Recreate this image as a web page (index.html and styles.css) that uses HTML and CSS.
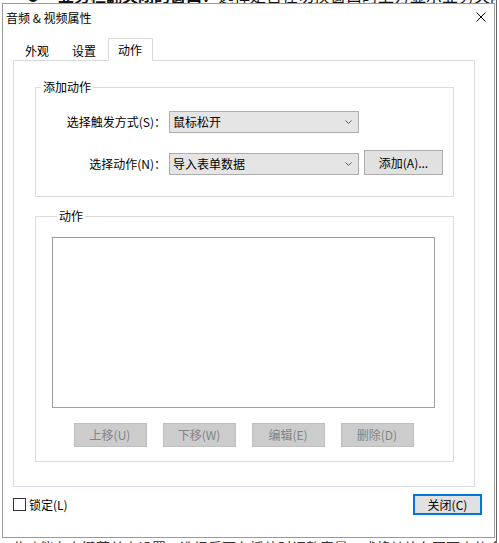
FILE: index.html
```html
<!DOCTYPE html>
<html lang="zh-CN">
<head>
  <meta charset="UTF-8">
  <title>音频 & 视频属性</title>
  <meta name="viewport" content="width=device-width, initial-scale=1.0">
  <link rel="stylesheet" href="styles.css">
</head>
<body>

  <!-- Document behind the dialog -->
  <div class="doc">
    <p class="doc-top"><span class="bullet">●</span><b>业务栏翻关闭的窗口：</b>选择是否在切换窗口时上方显示业务关闭按钮。</p>
    <p class="doc-bottom">此功能在右键菜单中设置，选择后可在播放时调整音量，或将其放在页面中的合适位置。</p>
  </div>

  <!-- Properties dialog -->
  <div class="dialog">
    <div class="titlebar">
      <span class="title">音频 &amp; 视频属性</span>
      <svg class="close-x" width="10" height="10" viewBox="0 0 10 10">
        <path d="M0.5 0.5 L9.5 9.5 M9.5 0.5 L0.5 9.5" stroke="#000" stroke-width="1" fill="none"/>
      </svg>
    </div>

    <div class="content">
      <div class="tabs">
        <div class="tab">外观</div>
        <div class="tab tab-second">设置</div>
        <div class="tab active">动作</div>
      </div>

      <div class="panel">
        <fieldset class="group group-add">
          <legend>添加动作</legend>
          <div class="row">
            <label class="row-label">选择触发方式(S)：</label>
            <div class="combo">
              <span>鼠标松开</span>
              <svg width="7" height="4" viewBox="0 0 7 4"><path d="M0.5 0.5 L3.5 3.5 L6.5 0.5" stroke="#555" fill="none"/></svg>
            </div>
          </div>
          <div class="row row-action">
            <label class="row-label">选择动作(N)：</label>
            <div class="combo">
              <span>导入表单数据</span>
              <svg width="7" height="4" viewBox="0 0 7 4"><path d="M0.5 0.5 L3.5 3.5 L6.5 0.5" stroke="#555" fill="none"/></svg>
            </div>
            <button class="btn btn-add">添加(A)...</button>
          </div>
        </fieldset>

        <fieldset class="group group-list">
          <legend>动作</legend>
          <div class="listbox"></div>
          <div class="list-buttons">
            <button class="btn" disabled>上移(U)</button>
            <button class="btn" disabled>下移(W)</button>
            <button class="btn" disabled>编辑(E)</button>
            <button class="btn" disabled>删除(D)</button>
          </div>
        </fieldset>
      </div>

      <div class="footer">
        <label class="lock"><span class="checkbox"></span>锁定(L)</label>
        <button class="btn btn-close">关闭(C)</button>
      </div>
    </div>
  </div>

</body>
</html>
```

FILE: styles.css
```css
body {
  margin: 0;
  background: #fff;
  font-family: "Noto Sans CJK SC", sans-serif;
  overflow: hidden;
}

/* document behind */
.doc {
  width: 496px;
  height: 543px;
  border-right: 1px solid #666;
  display: flex;
  flex-direction: column;
  justify-content: space-between;
  overflow: hidden;
}

.doc p {
  margin: 0;
  white-space: nowrap;
}

.doc-top {
  margin-top: -15px !important;
  padding-left: 27px;
  font-size: 16px;
  line-height: 20px;
  color: #111;
}

.bullet {
  display: inline-block;
  width: 31px;
  font-size: 12px;
}

.doc-bottom {
  margin-bottom: -14px !important;
  padding-left: 12px;
  font-size: 14px;
  line-height: 20px;
  color: #333;
}

/* dialog window */
.dialog {
  position: absolute;
  left: 2px;
  top: 3px;
  width: 493px;
  height: 535px;
  box-sizing: border-box;
  background: #fff;
  border: 1px solid #9a9a9a;
  font-size: 12px;
  color: #000;
}

.titlebar {
  height: 27px;
  padding-left: 3px;
  display: flex;
  align-items: center;
  justify-content: space-between;
  line-height: 27px;
}

.close-x {
  margin-right: 8px;
  margin-top: -1px;
}

.content {
  margin: 0 19px 0 10px;
}

.tabs {
  height: 29px;
  padding-left: 2px;
  display: flex;
  align-items: flex-end;
}

.tab {
  padding: 0 10px;
  height: 19px;
  line-height: 19px;
  margin-right: 3px;
}

.tab-second {
  margin-right: 2px;
}

.tab.active {
  position: relative;
  z-index: 1;
  height: 22px;
  line-height: 21px;
  padding: 0 10px 0 9px;
  margin-bottom: -1px;
  background: #fff;
  border: 1px solid #d9d9d9;
  border-bottom: none;
}

.panel {
  height: 427px;
  box-sizing: border-box;
  border: 1px solid #d8dae2;
  padding: 0 20px 0 21px;
}

/* group boxes */
.group {
  margin: 0;
  border: 1px solid #dcdcdc;
  padding: 0;
  min-width: 0;
}

.group legend {
  padding: 0 2px;
  margin-left: 5px;
  line-height: 12px;
}

.group-add {
  margin-top: 20px;
  padding: 18px 0 21px 0;
}

.row {
  display: flex;
  align-items: center;
  height: 22px;
}

.row-action {
  margin-top: 17px;
  height: 25px;
  align-items: flex-end;
}

.row-label {
  width: 130px;
  text-align: right;
  line-height: 22px;
}

.combo {
  width: 190px;
  height: 22px;
  box-sizing: border-box;
  margin-left: 3px;
  padding: 0 6px 0 3px;
  border: 1px solid #adadad;
  background: #e5e5e5;
  display: flex;
  align-items: center;
  justify-content: space-between;
  line-height: 20px;
}

.btn {
  font-family: "Noto Sans CJK SC", sans-serif;
  font-size: 12px;
  color: #000;
  background: #e1e1e1;
  border: 1px solid #adadad;
  padding: 0;
  margin: 0;
  box-sizing: border-box;
  line-height: 20px;
}

.btn-add {
  width: 79px;
  height: 25px;
  margin-left: 5px;
}

.group-list {
  margin-top: 13px;
  padding: 15px 0 14px 16px;
}

.listbox {
  width: 383px;
  height: 171px;
  box-sizing: border-box;
  border: 1px solid #a0a0a0;
  border-top-color: #9a9a9a;
  background: #fff;
}

.list-buttons {
  width: 383px;
  margin-top: 15px;
  display: flex;
  justify-content: center;
  gap: 16px;
}

.list-buttons .btn {
  width: 73px;
  height: 24px;
  background: #cccccc;
  border-color: #bfbfbf;
  color: #838383;
}

/* bottom row */
.footer {
  display: flex;
  align-items: center;
  justify-content: space-between;
  padding-top: 7px;
  margin-right: -7px;
}

.lock {
  display: flex;
  align-items: center;
  line-height: 14px;
}

.checkbox {
  width: 13px;
  height: 13px;
  box-sizing: border-box;
  border: 1px solid #333;
  background: #fff;
  margin-right: 3px;
}

.btn-close {
  width: 69px;
  height: 21px;
  border: 2px solid #0078d7;
  line-height: 17px;
}
```
